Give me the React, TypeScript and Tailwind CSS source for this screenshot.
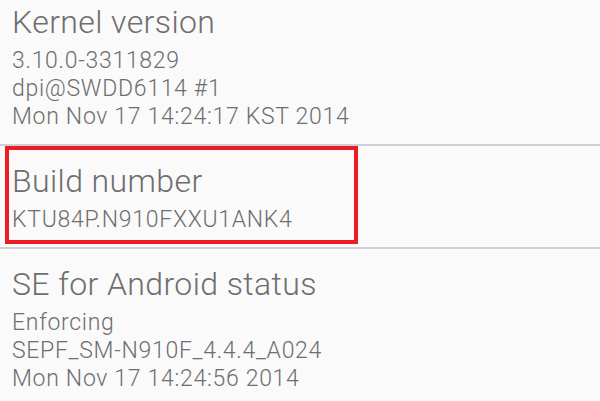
import React from 'react';

interface InfoItemProps {
  title: string;
  lines: string[];
  first?: boolean;
  highlighted?: boolean;
}

const InfoItem: React.FC<InfoItemProps> = ({ title, lines, first, highlighted }) => {
  return (
    <div className={`relative px-[12px] pb-[13px] ${first ? 'pt-[2px]' : 'pt-[15px]'}`}>
      <div className="text-[32px] leading-[40px] font-light tracking-[0.4px] text-[#6e6e6e]">{title}</div>
      <div className="mt-[5px] text-[23px] leading-[28px] font-light tracking-[0.7px] text-[#6e6e6e]">
        {lines.map((line) => (
          <div key={line}>{line}</div>
        ))}
      </div>
      {highlighted && (
        <div className="absolute top-0 left-[5px] w-[353px] h-[98px] border-4 border-[#ec1c24] pointer-events-none" />
      )}
    </div>
  );
};

const Divider = () => <div className="h-[2px] bg-[#cdd1d9]" />;

export default function App() {
  return (
    <div
      className="w-[600px] h-[401px] overflow-hidden bg-[#fafafa]"
      style={{ fontFamily: 'Roboto, "Noto Sans", sans-serif' }}
    >
      <InfoItem
        first
        title="Kernel version"
        lines={['3.10.0-3311829', 'dpi@SWDD6114 #1', 'Mon Nov 17 14:24:17 KST 2014']}
      />
      <Divider />
      <InfoItem highlighted title="Build number" lines={['KTU84P.N910FXXU1ANK4']} />
      <Divider />
      <InfoItem
        title="SE for Android status"
        lines={['Enforcing', 'SEPF_SM-N910F_4.4.4_A024', 'Mon Nov 17 14:24:56 2014']}
      />
    </div>
  );
}
